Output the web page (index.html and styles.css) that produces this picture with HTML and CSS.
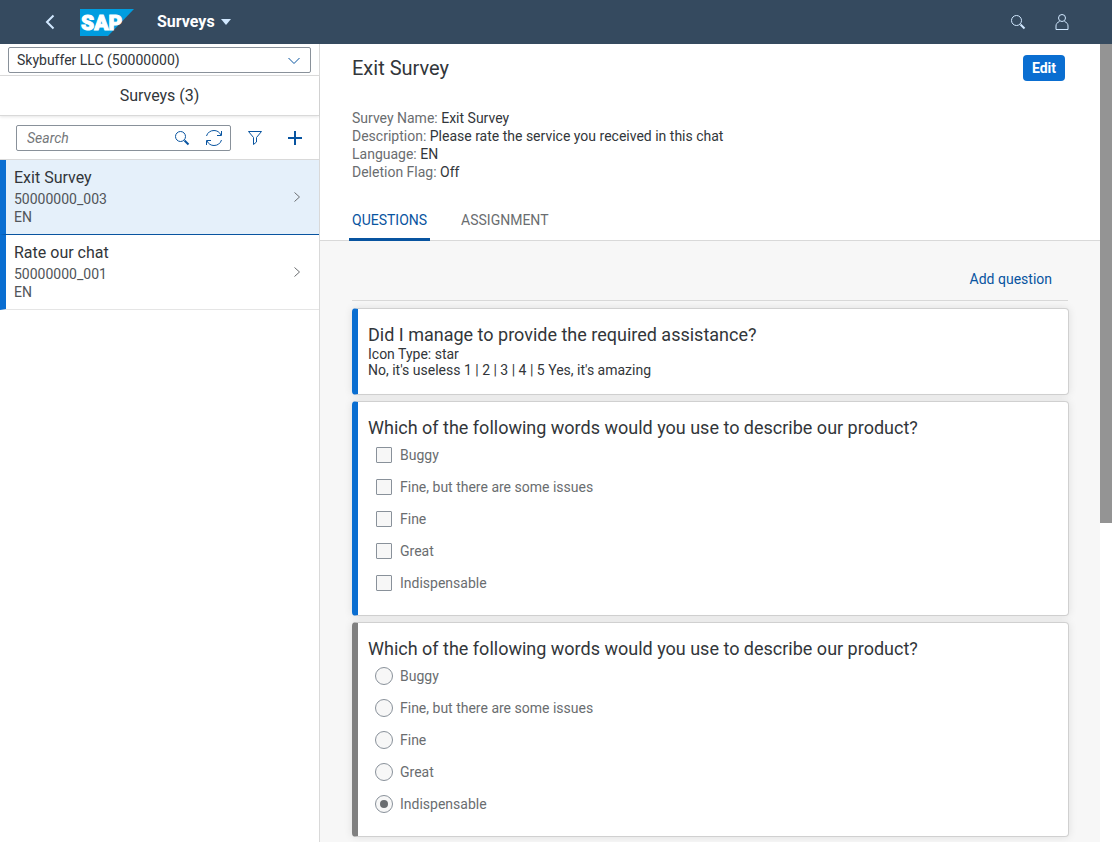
FILE: index.html
```
<!DOCTYPE html>
<html lang="en">

<head>
    <meta charset="UTF-8">
    <meta name="viewport" content="width=device-width, initial-scale=1.0">
    <title>Surveys</title>
    <link rel="stylesheet" href="styles.css">
</head>

<body>
    <header class="shell">
        <button class="shell-btn back" type="button" aria-label="Back">
            <svg width="16" height="16" viewBox="0 0 16 16"><path d="M11.5 1.5 5 8l6.5 6.5" stroke-width="2"/></svg>
        </button>
        <svg class="logo" width="54" height="27" viewBox="0 0 54 27" role="img" aria-label="SAP">
            <path d="M0 0H54L28 27H0Z" fill="#009de0"/>
            <text x="1" y="21">SAP</text>
        </svg>
        <button class="app-menu" type="button">Surveys <span class="caret"></span></button>
        <div class="shell-end">
            <button class="shell-btn" type="button" aria-label="Search">
                <svg width="16" height="16" viewBox="0 0 16 16"><circle cx="6.5" cy="6.5" r="5"/><path d="m10.5 10.5 4 4" stroke-width="2"/></svg>
            </button>
            <button class="shell-btn" type="button" aria-label="User">
                <svg width="16" height="16" viewBox="0 0 16 16"><circle cx="8" cy="4" r="3.5"/><path d="M5.5 7.5C3 8.5 2 10 2 12v3.5h12V12c0-2-1-3.5-3.5-4.5"/></svg>
            </button>
        </div>
    </header>

    <div class="page">
        <aside class="master">
            <div class="company">
                <select aria-label="Company">
                    <option>Skybuffer LLC (50000000)</option>
                </select>
                <svg class="select-arrow" width="14" height="14" viewBox="0 0 14 14"><path d="m1.5 4 5.5 5.5L12.5 4"/></svg>
            </div>
            <h2 class="master-title">Surveys (3)</h2>
            <div class="tools">
                <div class="search">
                    <input type="text" placeholder="Search" aria-label="Search surveys">
                    <button type="button" aria-label="Search">
                        <svg width="16" height="16" viewBox="0 0 16 16"><circle cx="6.5" cy="6.5" r="5"/><path d="m10.5 10.5 4 4" stroke-width="2"/></svg>
                    </button>
                    <button type="button" aria-label="Refresh">
                        <svg width="18" height="18" viewBox="0 0 18 18"><path d="M1.5 7C2.5 3.5 5.5 1.5 9 1.5c3 0 5.5 1.5 7 4.5M16.5 2v4.5H12M16.5 11c-1 3.5-4 5.5-7.5 5.5-3 0-5.5-1.5-7-4.5M1.5 16v-4.5H6"/></svg>
                    </button>
                </div>
                <button type="button" aria-label="Filter">
                    <svg width="16" height="16" viewBox="0 0 16 16"><path d="M1.5 1.5h13l-5 6v4.5l-3 2.5v-7Z"/></svg>
                </button>
                <button type="button" aria-label="Add">
                    <svg width="16" height="16" viewBox="0 0 16 16"><path d="M8 1v14M1 8h14" stroke-width="2"/></svg>
                </button>
            </div>
            <ul class="list">
                <li>
                    <a class="item selected" href="#">
                        <span class="item-text"><b>Exit Survey</b><span>50000000_003</span><span>EN</span></span>
                        <svg width="12" height="12" viewBox="0 0 12 12"><path d="m3.5 1.5 5 4.5-5 4.5"/></svg>
                    </a>
                </li>
                <li>
                    <a class="item" href="#">
                        <span class="item-text"><b>Rate our chat</b><span>50000000_001</span><span>EN</span></span>
                        <svg width="12" height="12" viewBox="0 0 12 12"><path d="m3.5 1.5 5 4.5-5 4.5"/></svg>
                    </a>
                </li>
            </ul>
        </aside>

        <main class="detail">
            <div class="object-header">
                <div class="title-row">
                    <h1>Exit Survey</h1>
                    <button class="edit" type="button">Edit</button>
                </div>
                <dl class="attributes">
                    <div><dt>Survey Name:</dt> <dd>Exit Survey</dd></div>
                    <div><dt>Description:</dt> <dd>Please rate the service you received in this chat</dd></div>
                    <div><dt>Language:</dt> <dd>EN</dd></div>
                    <div><dt>Deletion Flag:</dt> <dd>Off</dd></div>
                </dl>
                <nav class="tabs">
                    <a class="tab active" href="#">QUESTIONS</a>
                    <a class="tab" href="#">ASSIGNMENT</a>
                </nav>
            </div>

            <div class="questions">
                <div class="toolbar">
                    <button type="button">Add question</button>
                </div>

                <section class="card">
                    <h3>Did I manage to provide the required assistance?</h3>
                    <p>Icon Type: star</p>
                    <p>No, it's useless 1 | 2 | 3 | 4 | 5 Yes, it's amazing</p>
                </section>

                <section class="card">
                    <h3>Which of the following words would you use to describe our product?</h3>
                    <label class="option"><input type="checkbox" disabled> Buggy</label>
                    <label class="option"><input type="checkbox" disabled> Fine, but there are some issues</label>
                    <label class="option"><input type="checkbox" disabled> Fine</label>
                    <label class="option"><input type="checkbox" disabled> Great</label>
                    <label class="option"><input type="checkbox" disabled> Indispensable</label>
                </section>

                <section class="card inactive">
                    <h3>Which of the following words would you use to describe our product?</h3>
                    <label class="option"><input type="radio" name="words" disabled> Buggy</label>
                    <label class="option"><input type="radio" name="words" disabled> Fine, but there are some issues</label>
                    <label class="option"><input type="radio" name="words" disabled> Fine</label>
                    <label class="option"><input type="radio" name="words" disabled> Great</label>
                    <label class="option"><input type="radio" name="words" disabled checked> Indispensable</label>
                </section>
            </div>
        </main>
        <div class="scrollbar"><div class="thumb"></div></div>
    </div>
</body>

</html>
```
FILE: styles.css
```
* {
    box-sizing: border-box;
}

body {
    font-family: Roboto, "Liberation Sans", sans-serif;
    font-size: 14px;
    line-height: 18px;
    color: #32363a;
    background-color: #fff;
    margin: 0;
    height: 100vh;
    display: flex;
    flex-direction: column;
    overflow: hidden;
}

h1, h2, h3, p, dl, dd, ul {
    margin: 0;
    padding: 0;
    font-weight: normal;
}

button, input, select {
    font: inherit;
    color: inherit;
}

button {
    background: none;
    border: 0;
    padding: 0;
    cursor: pointer;
}

a {
    color: inherit;
    text-decoration: none;
}

svg {
    display: block;
    fill: none;
    stroke: currentColor;
}

/* shell bar */
.shell {
    flex: none;
    height: 44px;
    display: flex;
    align-items: center;
    background-color: #354a5f;
    color: #d1e8ff;
    padding: 0 32px;
}

.shell-btn {
    width: 36px;
    height: 36px;
    display: flex;
    align-items: center;
    justify-content: center;
}

.logo {
    margin-left: 12px;
    stroke: none;
}

.logo text {
    font-size: 21px;
    font-weight: 900;
    fill: #fff;
    stroke: #fff;
}

.app-menu {
    display: flex;
    align-items: center;
    gap: 6px;
    margin-left: 23px;
    color: #fff;
    font-size: 16px;
    font-weight: bold;
}

.caret {
    border: 5px solid transparent;
    border-top: 6px solid #d1e8ff;
    border-bottom: 0;
}

.shell-end {
    display: flex;
    gap: 8px;
    margin-left: auto;
}

.page {
    flex: 1;
    min-height: 0;
    display: flex;
}

/* survey list */
.master {
    flex: none;
    width: 320px;
    border-right: 1px solid #d9d9d9;
}

.company {
    position: relative;
    padding: 3px 8px 2px;
    border-bottom: 1px solid #d9d9d9;
}

.company select {
    display: block;
    width: 100%;
    height: 26px;
    appearance: none;
    background-color: #fff;
    border: 1px solid #89919a;
    border-radius: 2px;
    padding: 0 8px;
}

.select-arrow {
    position: absolute;
    right: 18px;
    top: 10px;
    color: #0854a0;
    pointer-events: none;
}

.master-title {
    font-size: 16px;
    line-height: 39px;
    text-align: center;
    border-bottom: 1px solid #d9d9d9;
    box-shadow: 0 1px 3px rgba(0, 0, 0, 0.1);
}

.tools {
    display: flex;
    align-items: center;
    gap: 16px;
    height: 44px;
    padding: 0 16px;
    color: #0854a0;
    border-bottom: 1px solid #d9d9d9;
}

.tools > button {
    width: 16px;
}

.tools > button + button {
    margin-left: 8px;
}

.search {
    flex: 1;
    min-width: 0;
    display: flex;
    align-items: center;
    height: 26px;
    border: 1px solid #89919a;
    border-radius: 2px;
}

.search input {
    flex: 1;
    min-width: 0;
    border: 0;
    outline: 0;
    background: none;
    padding: 0 10px;
}

.search input::placeholder {
    color: #74777a;
    font-style: italic;
}

.search button {
    width: 32px;
    display: flex;
    justify-content: center;
}

.list {
    list-style: none;
}

.item {
    display: flex;
    align-items: center;
    justify-content: space-between;
    height: 75px;
    padding: 0 16px 0 8px;
    border-left: 6px solid #0a6ed1;
    border-bottom: 1px solid #e5e5e5;
    color: #515559;
}

.item.selected {
    background-color: #e5f0fa;
    border-bottom-color: #0854a0;
}

.item-text {
    display: flex;
    flex-direction: column;
    padding-bottom: 2px;
}

.item b {
    font-size: 16px;
    font-weight: normal;
    line-height: 24px;
    color: #32363a;
}

.item svg {
    color: #6a6d70;
}

/* survey detail */
.detail {
    flex: 1;
    min-width: 0;
    overflow: hidden;
    background-color: #f7f7f7;
}

.object-header {
    background-color: #fff;
    border-bottom: 1px solid #d9d9d9;
    padding: 11px 32px 0;
}

.title-row {
    display: flex;
    justify-content: space-between;
    padding-right: 3px;
}

h1 {
    font-size: 20px;
    line-height: 26px;
}

.edit {
    width: 42px;
    height: 26px;
    background-color: #0a6ed1;
    border-radius: 4px;
    color: #fff;
    font-weight: bold;
}

.attributes {
    margin-top: 28px;
}

.attributes dt,
.attributes dd {
    display: inline;
}

.attributes dt {
    color: #6a6d70;
}

.tabs {
    display: flex;
    gap: 28px;
    margin: 18px -3px -1px;
}

.tab {
    padding: 12px 3px 9px;
    border-bottom: 3px solid transparent;
    color: #6a6d70;
}

.tab.active {
    color: #0854a0;
    border-bottom-color: #0854a0;
    border-radius: 2px 2px 0 0;
}

.questions {
    padding: 16px 32px;
}

.toolbar {
    display: flex;
    justify-content: flex-end;
    height: 44px;
    padding-right: 16px;
    margin-bottom: 7px;
    border-bottom: 1px solid #d9d9d9;
    color: #0854a0;
}

.card {
    padding: 15px 16px 16px 10px;
    margin: 0 -1px 6px 0;
    background-color: #fff;
    border: 1px solid #d0d0d0;
    border-left: 6px solid #0a6ed1;
    border-radius: 4px;
    box-shadow: 0 0 8px rgba(0, 0, 0, 0.1);
}

.card.inactive {
    border-left-color: #808080;
}

.card h3 {
    font-size: 18px;
    line-height: 22px;
}

.card p {
    line-height: 16px;
}

.option {
    display: flex;
    align-items: center;
    gap: 8px;
    height: 32px;
    padding-left: 8px;
    color: #6a6d70;
}

.option input {
    appearance: none;
    display: grid;
    place-items: center;
    width: 16px;
    height: 16px;
    margin: 0;
    background-color: #f7f7f7;
    border: 1px solid #89919a;
    border-radius: 1px;
}

.option input[type="radio"] {
    width: 18px;
    height: 18px;
    margin: 0 -1px;
    border-radius: 50%;
}

.option input[type="radio"]:checked::before {
    content: "";
    width: 8px;
    height: 8px;
    border-radius: 50%;
    background-color: #6a6d70;
}

.scrollbar {
    flex: none;
    width: 12px;
}

.thumb {
    height: 60%;
    background-color: #949494;
}
```
